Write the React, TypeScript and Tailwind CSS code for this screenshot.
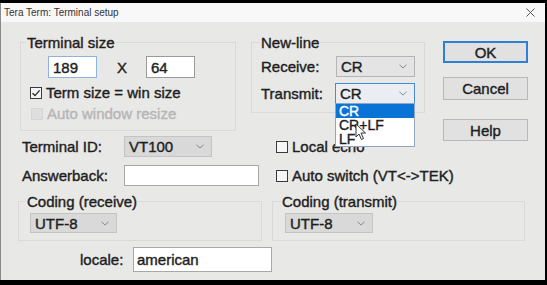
const font = "font-['Liberation_Sans',Arial,sans-serif]"

const Check = ({ checked = false, disabled = false }: { checked?: boolean; disabled?: boolean }) => (
  <span
    className={
      disabled
        ? 'w-[12px] h-[12px] bg-[#dedede] border border-[#d6d6d6] shrink-0'
        : 'w-[12px] h-[12px] bg-[#f6f6f6] border border-[#3a3a3a] shrink-0 flex items-center justify-center'
    }
  >
    {checked && (
      <svg width="10" height="10" viewBox="0 0 10 10">
        <path d="M1.5 5.2 L4 7.6 L8.6 2.4" fill="none" stroke="#2a2a2a" strokeWidth="1.4" />
      </svg>
    )}
  </span>
)

const Chevron = () => (
  <svg width="8" height="5" viewBox="0 0 8 5" className="shrink-0">
    <path d="M0.5 0.8 L4 4 L7.5 0.8" fill="none" stroke="#8a8a8a" strokeWidth="1" />
  </svg>
)

interface SelectProps {
  value: string
  className: string
}

const Select = ({ value, className }: SelectProps) => (
  <div className={`flex items-center justify-between pl-[4px] pr-[7px] border shrink-0 ${className}`}>
    <span>{value}</span>
    <Chevron />
  </div>
)

const Cursor = () => (
  <svg width="12" height="18" viewBox="0 0 12 18" className="absolute left-[19px] top-[19px]">
    <path d="M1 1 L1 14 L4 11 L6.5 16.5 L8.5 15.5 L6 10 L10.5 10 Z" fill="#fff" stroke="#333" strokeWidth="1" />
  </svg>
)

const App = () => {
  return (
    <div className={`w-[547px] h-[285px] bg-black pt-[3px] overflow-hidden ${font} text-[15px] leading-[17px] text-[#1e1e1e] [-webkit-text-stroke:0.4px]`}>
      <div className="w-[545px] h-[277px] flex flex-col border-l border-[#8a8a8a]">
        {/* Title bar */}
        <div className="h-[19px] bg-[#f8f8f8] flex items-center justify-between pl-[3px] pr-[10px] [-webkit-text-stroke:0px]">
          <span className="text-[10px] text-[#333]">Tera Term: Terminal setup</span>
          <svg width="9" height="9" viewBox="0 0 9 9">
            <path d="M0.5 0.5 L8.5 8.5 M8.5 0.5 L0.5 8.5" stroke="#555" strokeWidth="1" />
          </svg>
        </div>

        {/* Body */}
        <div className="flex-1 bg-[#e8e8e7] flex flex-col">
          <div className="flex">
            {/* Left part */}
            <div className="w-[442px] shrink-0 flex flex-col">
              <div className="flex items-start mt-[12px]">
                {/* Terminal size */}
                <fieldset className="ml-[19px] w-[216px] h-[97px] shrink-0 border border-[#d9d9d9]">
                  <legend className="ml-[5px] px-[1px]">Terminal size</legend>
                  <div className="flex items-center mt-[5px] ml-[27px]">
                    <div className="w-[49px] h-[22px] bg-white border border-[#8fb3dc] pl-[4px] flex items-center">189</div>
                    <span className="ml-[20px] w-[10px]">X</span>
                    <div className="ml-[19px] w-[49px] h-[22px] bg-white border border-[#9a9a9a] pl-[4px] flex items-center">64</div>
                  </div>
                  <div className="flex items-center mt-[6px] ml-[9px] gap-[4px]">
                    <Check checked />
                    <span>Term size = win size</span>
                  </div>
                  <div className="flex items-center mt-[4px] ml-[10px] gap-[4px] text-[#b6b6b6]">
                    <Check disabled />
                    <span>Auto window resize</span>
                  </div>
                </fieldset>

                {/* New-line */}
                <fieldset className="ml-[15px] w-[174px] h-[79px] shrink-0 border border-[#d9d9d9]">
                  <legend className="ml-[8px] px-[1px]">New-line</legend>
                  <div className="flex items-center mt-[5px] ml-[9px]">
                    <span className="w-[75px] shrink-0">Receive:</span>
                    <Select value="CR" className="w-[79px] h-[21px] bg-[#e4e4e4] border-[#b4b4b4]" />
                  </div>
                  <div className="flex items-center mt-[6px] ml-[9px]">
                    <span className="w-[74px] shrink-0">Transmit:</span>
                    <div className="relative">
                      <Select value="CR" className="w-[80px] h-[21px] bg-[#eaeef3] border-[#4a8ad4]" />
                      {/* Open list */}
                      <div className="absolute left-0 top-[20px] z-10 w-[80px] bg-white border border-[#8ea6c2] flex flex-col text-[14px]">
                        <span className="h-[14px] leading-[14px] pl-[3px] bg-[#0a74d6] text-white">CR</span>
                        <span className="h-[14px] leading-[14px] pl-[3px]">CR+LF</span>
                        <span className="h-[14px] leading-[14px] pl-[3px]">LF</span>
                        <Cursor />
                      </div>
                    </div>
                  </div>
                </fieldset>
              </div>

              {/* Terminal ID */}
              <div className="flex items-center mt-[5px] ml-[21px]">
                <span className="w-[102px] shrink-0">Terminal ID:</span>
                <Select value="VT100" className="w-[88px] h-[21px] bg-[#d9d9d9] border-[#c4c4c4]" />
                <div className="flex items-center ml-[64px] gap-[4px] whitespace-nowrap shrink-0">
                  <Check />
                  <span>Local echo</span>
                </div>
              </div>

              {/* Answerback */}
              <div className="flex items-center mt-[8px] ml-[21px]">
                <span className="w-[102px] shrink-0">Answerback:</span>
                <div className="w-[135px] h-[21px] shrink-0 bg-white border border-[#a8a8a8]" />
                <div className="flex items-center ml-[17px] gap-[4px] whitespace-nowrap shrink-0">
                  <Check />
                  <span>Auto switch (VT&lt;-&gt;TEK)</span>
                </div>
              </div>
            </div>

            {/* Buttons */}
            <div className="flex flex-col mt-[19px]">
              <button className="w-[85px] h-[22px] bg-[#e1e1e1] border-2 border-[#2f7fd2] flex items-center justify-center">OK</button>
              <button className="mt-[14px] w-[85px] h-[23px] bg-[#e1e1e1] border border-[#b8b8b8] flex items-center justify-center">Cancel</button>
              <button className="mt-[19px] w-[85px] h-[22px] bg-[#e1e1e1] border border-[#b8b8b8] flex items-center justify-center">Help</button>
            </div>
          </div>

          {/* Coding */}
          <div className="flex items-start mt-[7px]">
            <fieldset className="ml-[17px] w-[244px] h-[48px] border border-[#d9d9d9]">
              <legend className="ml-[7px] px-[1px]">Coding (receive)</legend>
              <Select value="UTF-8" className="mt-[3px] ml-[11px] w-[87px] h-[20px] bg-[#d9d9d9] border-[#c4c4c4]" />
            </fieldset>
            <fieldset className="ml-[10px] w-[253px] h-[48px] border border-[#d9d9d9]">
              <legend className="ml-[8px] px-[1px]">Coding (transmit)</legend>
              <Select value="UTF-8" className="mt-[3px] ml-[12px] w-[88px] h-[20px] bg-[#d9d9d9] border-[#c4c4c4]" />
            </fieldset>
          </div>

          {/* Locale */}
          <div className="flex items-center mt-[6px] ml-[79px]">
            <span className="w-[53px]">locale:</span>
            <div className="w-[139px] h-[25px] bg-white border border-[#a8a8a8] pl-[3px] flex items-center">american</div>
          </div>
        </div>
      </div>
    </div>
  )
}

export default App
